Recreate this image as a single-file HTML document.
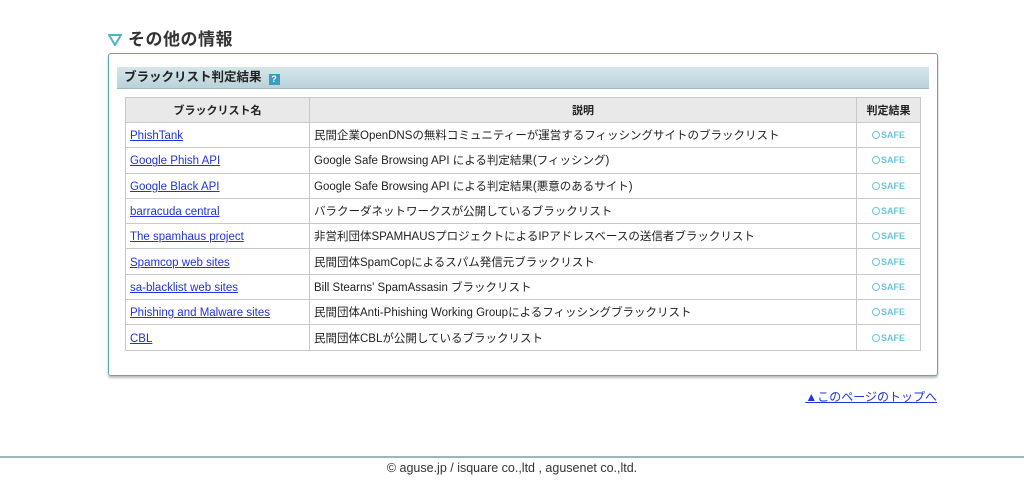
<!DOCTYPE html>
<html><head><meta charset="utf-8"><style>
body{margin:0;width:1024px;height:483px;background:#fff;font-family:"Liberation Sans","Noto Sans CJK JP",sans-serif;position:relative;overflow:hidden;color:#222}
.h{position:absolute;left:108px;top:28px;font-size:17px;line-height:24px;font-weight:bold;color:#333;letter-spacing:0.5px}
.h svg{vertical-align:-1px;margin-right:6px}
.box{position:absolute;left:108px;top:53px;width:828px;height:321px;border:1px solid #5fa8b0;border-radius:3px;box-shadow:0 2px 2px #bbb}
.bar{position:absolute;left:8px;top:13px;width:812px;height:21px;background:linear-gradient(#d6e6ea,#b9d2d8);border-bottom:1px solid #9fbcc3;font-size:12.5px;font-weight:bold;line-height:21px;color:#222}
.bar span{margin-left:7px}
.q{display:inline-block;width:11px;height:11px;background:#3a9cc0;color:#fff;font-size:9px;line-height:11px;text-align:center;vertical-align:-1px;margin-left:4px}
table{position:absolute;left:16px;top:43px;width:796px;border-collapse:collapse;font-size:11.5px}
td,th{border:1px solid #c8c8c8;height:24.3px;padding:0 4px;white-space:nowrap;vertical-align:middle}
th{background:#e9e9e9;font-weight:bold;font-size:11px;height:24px}
td a{color:#2233dd;text-decoration:underline;display:inline-block;padding-top:2px}
.s{text-align:center;color:#6cc4d6;font-size:9px;font-weight:bold}
.s i{display:inline-block;width:6px;height:6px;border:1.5px solid #6cc4d6;border-radius:50%;vertical-align:-1px;margin-right:1px}
.top{position:absolute;right:87px;top:388px;font-size:12px;color:#2233dd;text-decoration:underline}
.f{position:absolute;left:0;top:456px;width:1024px;border-top:2px solid #9bb7bb;text-align:center;font-size:12.5px;padding-top:3px;color:#333}
</style></head><body>
<div class="h"><svg width="14" height="12"><polygon points="1,1 13,1 7,11" fill="#fff" stroke="#4cb4c8" stroke-width="2"/></svg>その他の情報</div>
<div class="box">
<div class="bar"><span>ブラックリスト判定結果</span><span class="q">?</span></div>
<table>
<tr><th style="width:175px">ブラックリスト名</th><th>説明</th><th style="width:55px">判定結果</th></tr>
<tr><td><a>PhishTank</a></td><td>民間企業OpenDNSの無料コミュニティーが運営するフィッシングサイトのブラックリスト</td><td class="s"><i></i>SAFE</td></tr>
<tr><td><a>Google Phish API</a></td><td>Google Safe Browsing API による判定結果(フィッシング)</td><td class="s"><i></i>SAFE</td></tr>
<tr><td><a>Google Black API</a></td><td>Google Safe Browsing API による判定結果(悪意のあるサイト)</td><td class="s"><i></i>SAFE</td></tr>
<tr><td><a>barracuda central</a></td><td>バラクーダネットワークスが公開しているブラックリスト</td><td class="s"><i></i>SAFE</td></tr>
<tr><td><a>The spamhaus project</a></td><td>非営利団体SPAMHAUSプロジェクトによるIPアドレスベースの送信者ブラックリスト</td><td class="s"><i></i>SAFE</td></tr>
<tr><td><a>Spamcop web sites</a></td><td>民間団体SpamCopによるスパム発信元ブラックリスト</td><td class="s"><i></i>SAFE</td></tr>
<tr><td><a>sa-blacklist web sites</a></td><td>Bill Stearns' SpamAssasin ブラックリスト</td><td class="s"><i></i>SAFE</td></tr>
<tr><td><a>Phishing and Malware sites</a></td><td>民間団体Anti-Phishing Working Groupによるフィッシングブラックリスト</td><td class="s"><i></i>SAFE</td></tr>
<tr><td><a>CBL</a></td><td>民間団体CBLが公開しているブラックリスト</td><td class="s"><i></i>SAFE</td></tr>
</table>
</div>
<a class="top">▲このページのトップへ</a>
<div class="f">© aguse.jp / isquare co.,ltd , agusenet co.,ltd.</div>
</body></html>
